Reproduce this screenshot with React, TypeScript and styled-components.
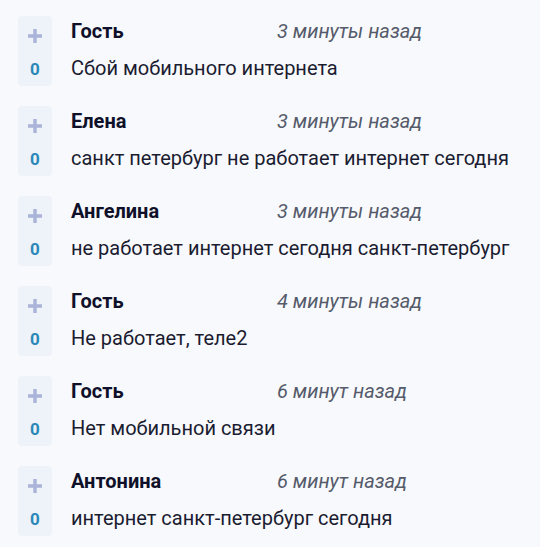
import React from "react";
import styled, { createGlobalStyle } from "styled-components";

const Global = createGlobalStyle`
  html, body { margin: 0; padding: 0; background: #f8f9fc; }
  body { font-family: Roboto, "Liberation Sans", Arial, sans-serif; }
`;

const List = styled.div`
  display: flex;
  flex-direction: column;
  gap: 20px;
  padding: 16px 0 0 18px;
`;

const Row = styled.div`
  display: flex;
  align-items: flex-start;
  gap: 19px;
`;

const Vote = styled.div`
  width: 34px;
  height: 70px;
  flex: none;
  border-radius: 4px;
  background: #eef2f9;
  display: flex;
  flex-direction: column;
  align-items: center;
`;

const Plus = styled.svg`
  margin-top: 13px;
  width: 14px;
  height: 14px;
`;

const Score = styled.div`
  margin-top: 17px;
  font-size: 17px;
  font-weight: 700;
  color: #2b88b8;
  line-height: 18px;
`;

const Body = styled.div`
  display: flex;
  flex-direction: column;
  padding-top: 3px;
`;

const Head = styled.div`
  display: flex;
  align-items: baseline;
  height: 24px;
  line-height: 24px;
`;

const Name = styled.span`
  width: 206px;
  font-size: 20px;
  font-weight: 700;
  color: #0f1029;
`;

const Time = styled.span`
  font-size: 20px;
  font-style: italic;
  color: #555b6b;
`;

const Text = styled.div`
  margin-top: 13px;
  font-size: 20px;
  color: #1b1c31;
  line-height: 24px;
`;

const items = [
  { name: "Гость", time: "3 минуты назад", text: "Сбой мобильного интернета" },
  { name: "Елена", time: "3 минуты назад", text: "санкт петербург не работает интернет сегодня" },
  { name: "Ангелина", time: "3 минуты назад", text: "не работает интернет сегодня санкт-петербург" },
  { name: "Гость", time: "4 минуты назад", text: "Не работает, теле2" },
  { name: "Гость", time: "6 минут назад", text: "Нет мобильной связи" },
  { name: "Антонина", time: "6 минут назад", text: "интернет санкт-петербург сегодня" },
];

export default function App() {
  return (
    <>
      <Global />
      <List>
        {items.map((it, i) => (
          <Row key={i}>
            <Vote>
              <Plus viewBox="0 0 14 14">
                <path d="M7 0v14M0 7h14" stroke="#aab3d8" strokeWidth="3.4" />
              </Plus>
              <Score>0</Score>
            </Vote>
            <Body>
              <Head>
                <Name>{it.name}</Name>
                <Time>{it.time}</Time>
              </Head>
              <Text>{it.text}</Text>
            </Body>
          </Row>
        ))}
      </List>
    </>
  );
}
